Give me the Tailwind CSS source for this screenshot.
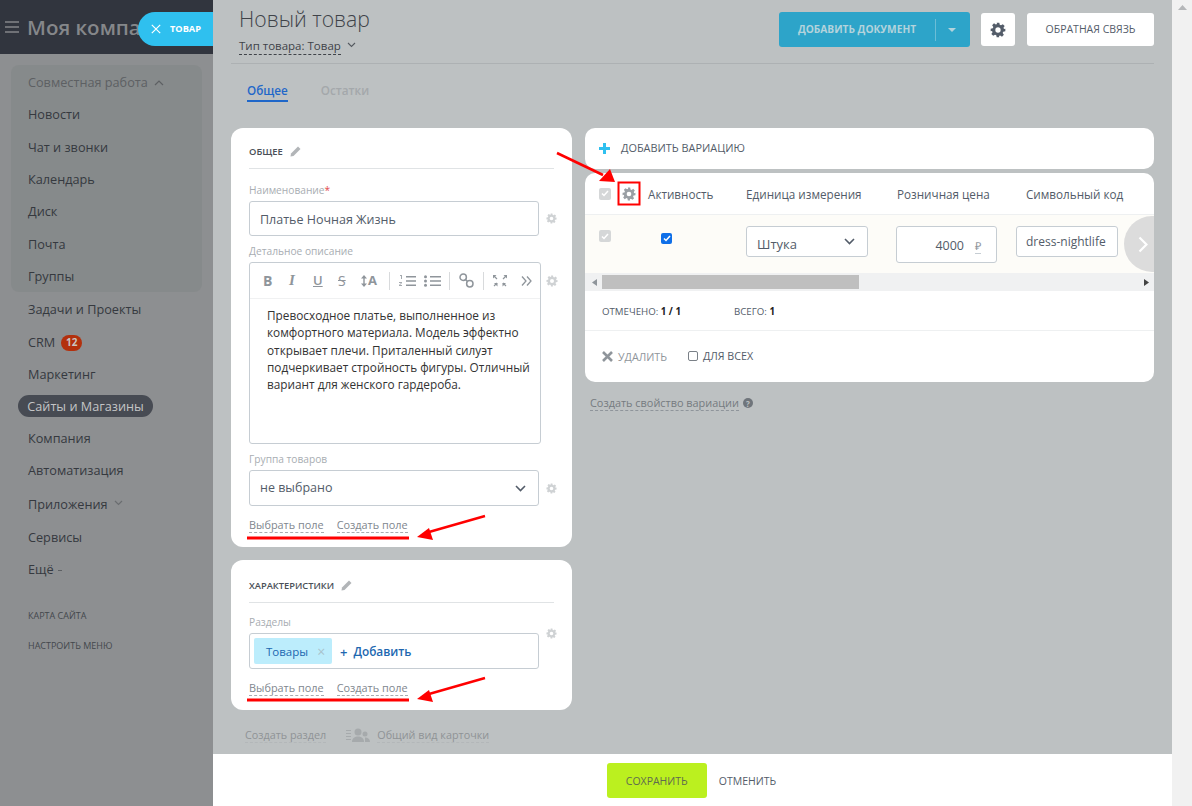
<!DOCTYPE html>
<html>
<head>
  <meta charset="UTF-8">
  <title>Новый товар</title>
  <script src="https://cdn.jsdelivr.net/npm/@tailwindcss/browser@4"></script>
</head>
<body class="m-0 overflow-hidden bg-[#bdc1c2] font-['Open_Sans',sans-serif]">
  <div class="relative flex h-[806px] w-[1192px] overflow-hidden">

    <!-- Sidebar -->
    <aside class="h-full w-[213px] shrink-0 bg-[#8d8f91] text-[12.7px] text-[#35393f]">
      <div class="flex h-[54px] items-center overflow-hidden bg-[#31353e] pl-[5px]">
        <div class="flex w-[14px] flex-col gap-[3px]">
          <div class="h-[2px] bg-[#6f7176]"></div>
          <div class="h-[2px] bg-[#6f7176]"></div>
          <div class="h-[2px] bg-[#6f7176]"></div>
        </div>
        <div class="ml-[8px] w-[116px] overflow-hidden whitespace-nowrap text-[20.5px] font-semibold text-[#85878a]">Моя компания</div>
      </div>
      <div class="mx-[11px] mt-[11px] h-[227px] rounded-[8px] bg-[#868a8b] pl-[17px] pt-[1.5px]">
        <div class="flex h-[32px] items-center text-[#5d6063]">Совместная работа
          <svg class="ml-[6px]" width="10" height="6" viewBox="0 0 10 6" fill="none" stroke="#5d6063" stroke-width="1.2"><path d="M1 5l4-4 4 4"/></svg>
        </div>
        <div class="flex h-[32.4px] items-center">Новости</div>
        <div class="flex h-[32.4px] items-center">Чат и звонки</div>
        <div class="flex h-[32.4px] items-center">Календарь</div>
        <div class="flex h-[32.4px] items-center">Диск</div>
        <div class="flex h-[32.4px] items-center">Почта</div>
        <div class="flex h-[32.4px] items-center">Группы</div>
      </div>
      <div class="mt-[2px] pl-[28px]">
        <div class="flex h-[32px] items-center">Задачи и Проекты</div>
        <div class="flex h-[33px] items-center">CRM
          <span class="ml-[6px] flex h-[16px] w-[21px] items-center justify-center rounded-full bg-[#b3300d] text-[10px] font-bold text-[#c9c5c1]">12</span>
        </div>
        <div class="flex h-[32px] items-center">Маркетинг</div>
      </div>
      <div class="mb-[6px] ml-[18px] mt-[4px] flex h-[22px] w-[135px] items-center justify-center rounded-full bg-[#474b53] pt-[2px] text-[#c4c5c6]">Сайты и Магазины</div>
      <div class="pl-[28px]">
        <div class="flex h-[32px] items-center">Компания</div>
        <div class="flex h-[32px] items-center">Автоматизация</div>
        <div class="flex h-[35px] items-center">Приложения
          <svg class="mb-[3px] ml-[6px]" width="9" height="6" viewBox="0 0 9 6" fill="none" stroke="#6a6d70" stroke-width="1.2"><path d="M1 1l3.5 3.5L8 1"/></svg>
        </div>
        <div class="flex h-[32px] items-center">Сервисы</div>
        <div class="flex h-[31px] items-center">Ещё
          <span class="ml-[4px] mt-[1px] h-px w-[4px] bg-[#5d6063]"></span>
        </div>
        <div class="mt-[16px] flex h-[30px] items-center text-[9px] text-[#43474c]">КАРТА САЙТА</div>
        <div class="flex h-[30px] items-center text-[9px] text-[#43474c]">НАСТРОИТЬ МЕНЮ</div>
      </div>
    </aside>

    <!-- Close tab over the sidebar -->
    <div class="absolute left-[138px] top-[12px] flex h-[34px] w-[75px] items-center rounded-l-full bg-[#2fc0ef] pl-[13px] text-white">
      <svg width="10" height="10" viewBox="0 0 10 10" fill="none" stroke="#fff" stroke-width="1.2"><path d="M.8.8l8.4 8.4M9.2.8L.8 9.2"/></svg>
      <span class="ml-[9px] text-[9.2px] font-bold">ТОВАР</span>
    </div>

    <!-- Slider content -->
    <div class="flex h-full w-[959px] shrink-0 flex-col">
      <main class="h-[754px] overflow-hidden pl-[18px] pr-[18px]">
        <div class="flex h-[64px] border-b border-[#adb1b3] pl-[8px] pt-[5px]">
          <div>
            <div class="text-[21.2px] leading-[28px] font-light text-[#3f4349]">Новый товар</div>
            <div class="mt-[5px] flex items-center text-[11.5px] leading-[16px] text-[#3f4349]">
              <span class="border-b border-dashed border-[#3f4349]">Тип товара: Товар</span>
              <svg class="mb-[3px] ml-[6px]" width="9" height="6" viewBox="0 0 9 6" fill="none" stroke="#555a60" stroke-width="1.1"><path d="M1 1l3.5 3.5L8 1"/></svg>
            </div>
          </div>
          <div class="ml-auto mt-[7px] flex h-[35px] items-start">
            <div class="flex h-[35px] w-[191px] items-center rounded-[3px] bg-[#2da4c9] text-[10.2px] font-bold text-[#b3d3dc]">
              <span class="w-[156px] text-center">ДОБАВИТЬ ДОКУМЕНТ</span>
              <span class="h-[22px] w-px bg-[#6cbdd6]"></span>
              <svg class="ml-[12px]" width="8" height="4" viewBox="0 0 8 4" fill="#b3d3dc"><path d="M0 0h8L4 4z"/></svg>
            </div>
            <div class="ml-[11px] mt-px flex h-[33px] w-[34px] items-center justify-center rounded-[3px] bg-white">
              <svg width="16" height="16" viewBox="0 0 24 24" fill="#535c69"><path fill-rule="evenodd" d="M10 1h4l.6 3.2 1.9.8 2.7-1.8 2.8 2.8-1.8 2.7.8 1.9L23 10v4l-3.2.6-.8 1.9 1.8 2.7-2.8 2.8-2.7-1.8-1.9.8L14 23h-4l-.6-3.2-1.9-.8-2.7 1.8-2.8-2.8 1.8-2.7-.8-1.9L1 14v-4l3.2-.6.8-1.9-1.8-2.7 2.8-2.8 2.7 1.8 1.9-.8zM12 8a4 4 0 100 8 4 4 0 000-8z"/></svg>
            </div>
            <div class="ml-[12px] mt-px flex h-[33px] w-[127px] items-center justify-center rounded-[3px] bg-white text-[10.5px] font-medium text-[#535c69]">ОБРАТНАЯ СВЯЗЬ</div>
          </div>
        </div>

        <div class="ml-[16px] mt-[18px] flex h-[46px] items-start text-[11.7px]">
          <div class="h-[20px] border-b-2 border-[#1f67c9] font-semibold leading-[17px] text-[#1f67c9]">Общее</div>
          <div class="ml-[33px] font-semibold leading-[17px] text-[#a4a8ab]">Остатки</div>
        </div>

        <div class="flex items-start">
          <!-- Left column -->
          <div class="w-[341px] shrink-0">
            <section class="h-[419px] rounded-[12px] bg-white px-[18px] pt-[16px] text-[#535c69]">
              <div class="flex h-[25px] items-start border-b border-[#e0e3e5]">
                <span class="text-[9.4px] font-semibold leading-[16px] text-[#4a4f57]">ОБЩЕЕ</span>
                <svg class="ml-[7px] mt-[2px]" width="11" height="11" viewBox="0 0 11 11" fill="#b2b5b8"><path d="M8 .5L10.500 3 3.500 10 .5 10.500 1 7.500z"/></svg>
              </div>
              <div class="mt-[14px] text-[10.2px] leading-[15px] text-[#a8adb2]">Наименование<span class="text-[#e34a4a]">*</span></div>
              <div class="mt-[3px] flex items-center">
                <div class="flex h-[35px] w-[290px] shrink-0 items-center rounded-[3px] border border-[#c6cdd3] pl-[10px] pt-[3px] text-[12.5px] text-[#535c69]">Платье Ночная Жизнь</div>
                <svg class="ml-[7px] shrink-0" width="11" height="11" viewBox="0 0 24 24" fill="#cfd2d4"><path fill-rule="evenodd" d="M10 1h4l.6 3.2 1.9.8 2.7-1.8 2.8 2.8-1.8 2.7.8 1.9L23 10v4l-3.2.6-.8 1.9 1.8 2.7-2.8 2.8-2.7-1.8-1.9.8L14 23h-4l-.6-3.2-1.9-.8-2.7 1.8-2.8-2.8 1.8-2.7-.8-1.9L1 14v-4l3.2-.6.8-1.9-1.8-2.7 2.8-2.8 2.7 1.8 1.9-.8zM12 8a4 4 0 100 8 4 4 0 000-8z"/></svg>
              </div>
              <div class="mt-[8px] text-[10.2px] leading-[15px] text-[#a8adb2]">Детальное описание</div>
              <div class="mt-[3px] flex items-start">
                <div class="h-[182px] w-[292px] shrink-0 rounded-[3px] border border-[#c6cdd3]">
                  <div class="flex h-[36px] items-center border-b border-[#f0f1f2] pl-[13px] text-[#8f959b]">
                    <span class="w-[26px] text-[14px] font-bold">B</span>
                    <span class="w-[24px] font-['Liberation_Serif',serif] text-[15px] font-bold italic">I</span>
                    <span class="w-[25px] text-[13px] font-semibold underline">U</span>
                    <span class="w-[23px] text-[14px] line-through">S</span>
                    <span class="flex w-[28px] items-center">
                      <svg width="6" height="12" viewBox="0 0 6 12" fill="#8f959b"><path d="M3 0l3 3.500H3.700v5H6L3 12 0 8.500h2.300v-5H0z"/></svg>
                      <span class="ml-[1px] text-[13px] font-bold">A</span>
                    </span>
                    <span class="h-[18px] w-px bg-[#d8dadc]"></span>
                    <svg class="ml-[9px]" width="17" height="12" viewBox="0 0 17 12" fill="#8f959b"><path d="M7 1h10v1.500H7zM7 5.200h10v1.500H7zM7 9.500h10V11H7z"/><path d="M1 0h2v4H2V1H1zM0 7h3v1L1 10h2v1H0v-1l2-2H0z" fill-opacity=".8"/></svg>
                    <svg class="ml-[8px]" width="17" height="12" viewBox="0 0 17 12" fill="#8f959b"><circle cx="1.500" cy="1.700" r="1.500"/><circle cx="1.500" cy="6" r="1.500"/><circle cx="1.500" cy="10.300" r="1.500"/><path d="M6 1h11v1.500H6zM6 5.200h11v1.500H6zM6 9.500h11V11H6z"/></svg>
                    <span class="ml-[8px] h-[18px] w-px bg-[#d8dadc]"></span>
                    <svg class="ml-[9px]" width="15" height="15" viewBox="0 0 15 15" fill="none" stroke="#8f959b" stroke-width="1.500"><circle cx="4.200" cy="4.200" r="3.200"/><circle cx="10.800" cy="10.800" r="3.200"/><path d="M6.500 6.500l2 2"/></svg>
                    <span class="ml-[9px] h-[18px] w-px bg-[#d8dadc]"></span>
                    <svg class="ml-[9px]" width="14" height="12" viewBox="0 0 14 12" fill="none" stroke="#8f959b" stroke-width="1.200"><path d="M1 1l3 3M13 1l-3 3M1 11l3-3M13 11l-3-3"/><path d="M0 0h3.500L0 3.500zM14 0h-3.500L14 3.500zM4.500 8v3.500L1 8zM9.500 8v3.500L13 8z" fill="#8f959b" stroke="none"/></svg>
                    <svg class="ml-[14px]" width="11" height="10" viewBox="0 0 11 10" fill="none" stroke="#8f959b" stroke-width="1.300"><path d="M1 .5L5 5 1 9.500M6 .5L10 5 6 9.500"/></svg>
                  </div>
                  <div class="pl-[17px] pr-[8px] pt-[8px] text-[11.8px] leading-[17.3px] text-[#333]">Превосходное платье, выполненное из комфортного материала. Модель эффектно открывает плечи. Приталенный силуэт подчеркивает стройность фигуры. Отличный вариант для женского гардероба.</div>
                </div>
                <svg class="ml-[5px] mt-[13px] shrink-0" width="12" height="12" viewBox="0 0 24 24" fill="#cfd2d4"><path fill-rule="evenodd" d="M10 1h4l.6 3.2 1.9.8 2.7-1.8 2.8 2.8-1.8 2.7.8 1.9L23 10v4l-3.2.6-.8 1.9 1.8 2.7-2.8 2.8-2.7-1.8-1.9.8L14 23h-4l-.6-3.2-1.9-.8-2.7 1.8-2.8-2.8 1.8-2.7-.8-1.9L1 14v-4l3.2-.6.8-1.9-1.8-2.7 2.8-2.8 2.7 1.8 1.9-.8zM12 8a4 4 0 100 8 4 4 0 000-8z"/></svg>
              </div>
              <div class="mt-[8px] text-[10.2px] leading-[15px] text-[#a8adb2]">Группа товаров</div>
              <div class="mt-[3px] flex items-center">
                <div class="flex h-[36px] w-[290px] shrink-0 items-center justify-between rounded-[3px] border border-[#c6cdd3] px-[10px] pt-[1px] text-[12.5px] text-[#535c69]">не выбрано
                  <svg class="mr-[2px]" width="11" height="7" viewBox="0 0 11 7" fill="none" stroke="#535c69" stroke-width="1.600"><path d="M1 1l4.500 4.500L10 1"/></svg>
                </div>
                <svg class="ml-[7px] shrink-0" width="11" height="11" viewBox="0 0 24 24" fill="#cfd2d4"><path fill-rule="evenodd" d="M10 1h4l.6 3.2 1.9.8 2.7-1.8 2.8 2.8-1.8 2.7.8 1.9L23 10v4l-3.2.6-.8 1.9 1.8 2.7-2.8 2.8-2.7-1.8-1.9.8L14 23h-4l-.6-3.2-1.9-.8-2.7 1.8-2.8-2.8 1.8-2.7-.8-1.9L1 14v-4l3.2-.6.8-1.9-1.8-2.7 2.8-2.8 2.7 1.8 1.9-.8zM12 8a4 4 0 100 8 4 4 0 000-8z"/></svg>
              </div>
              <div class="mt-[11px] flex text-[10.9px] leading-[15px] text-[#80868e]">
                <span class="border-b border-dashed border-[#a8adb2]">Выбрать поле</span>
                <span class="ml-[13px] border-b border-dashed border-[#a8adb2]">Создать поле</span>
              </div>
            </section>

            <section class="mt-[13px] h-[150px] rounded-[12px] bg-white px-[18px] pt-[18px]">
              <div class="flex h-[25px] items-start border-b border-[#e0e3e5]">
                <span class="text-[9.3px] font-semibold leading-[16px] text-[#4a4f57]">ХАРАКТЕРИСТИКИ</span>
                <svg class="ml-[7px] mt-[2px]" width="11" height="11" viewBox="0 0 11 11" fill="#b2b5b8"><path d="M8 .5L10.500 3 3.500 10 .5 10.500 1 7.500z"/></svg>
              </div>
              <div class="mt-[12px] text-[10.2px] leading-[15px] text-[#a8adb2]">Разделы</div>
              <div class="mt-[3px] flex items-start">
                <div class="flex h-[36px] w-[290px] shrink-0 items-center rounded-[3px] border border-[#c6cdd3] pl-[4px]">
                  <div class="flex h-[26px] w-[78px] items-center rounded-[2px] bg-[#bcedfc] pl-[12px] pt-px text-[11.5px] text-[#2067b0]">Товары
                    <span class="ml-[9px] text-[14px] leading-none text-[#a9c3cc]">×</span>
                  </div>
                  <span class="ml-[8px] pt-[2px] text-[13px] font-semibold leading-none text-[#2067b0]">+</span>
                  <span class="ml-[6px] pt-[2px] text-[11.8px] font-semibold text-[#2067b0]">Добавить</span>
                </div>
                <svg class="ml-[7px] mt-[-5px] shrink-0" width="11" height="11" viewBox="0 0 24 24" fill="#cfd2d4"><path fill-rule="evenodd" d="M10 1h4l.6 3.2 1.9.8 2.7-1.8 2.8 2.8-1.8 2.7.8 1.9L23 10v4l-3.2.6-.8 1.9 1.8 2.7-2.8 2.8-2.7-1.8-1.9.8L14 23h-4l-.6-3.2-1.9-.8-2.7 1.8-2.8-2.8 1.8-2.7-.8-1.9L1 14v-4l3.2-.6.8-1.9-1.8-2.7 2.8-2.8 2.7 1.8 1.9-.8zM12 8a4 4 0 100 8 4 4 0 000-8z"/></svg>
              </div>
              <div class="mt-[11px] flex text-[10.9px] leading-[15px] text-[#80868e]">
                <span class="border-b border-dashed border-[#a8adb2]">Выбрать поле</span>
                <span class="ml-[13px] border-b border-dashed border-[#a8adb2]">Создать поле</span>
              </div>
            </section>

            <div class="mt-[17px] flex items-center pl-[14px] text-[10.8px] leading-[15px] text-[#8f9396]">
              <span class="border-b border-dashed border-[#b3b7b9]">Создать раздел</span>
              <svg class="ml-[20px]" width="24" height="15" viewBox="0 0 24 15" fill="#a6aaac"><path d="M0 2h5v1H0zM0 5h5v1H0zM0 8h5v1H0zM0 11h5v1H0z"/><circle cx="12" cy="4" r="3.500"/><path d="M6 14c0-4 3-5.500 6-5.500s6 1.500 6 5.500z"/><circle cx="19" cy="6" r="2.500"/><path d="M19 14h5c0-3-2-4.500-5-4.500z"/></svg>
              <span class="ml-[7px] border-b border-dashed border-[#b3b7b9]">Общий вид карточки</span>
            </div>
          </div>

          <!-- Right column -->
          <div class="ml-[13px] w-[569px] shrink-0">
            <div class="flex h-[41px] items-center rounded-[10px] bg-white pl-[14px] text-[10.9px] font-medium text-[#535c69]">
              <svg width="11" height="11" viewBox="0 0 11 11" fill="#2fc0ef"><path d="M4 0h3v4h4v3H7v4H4V7H0V4h4z"/></svg>
              <span class="ml-[11px]">ДОБАВИТЬ ВАРИАЦИЮ</span>
            </div>

            <div class="relative mt-[4px] h-[209px] overflow-hidden rounded-[10px] bg-white">
              <div class="flex h-[42px] items-center border-b border-[#eef0f1] text-[11.7px] text-[#535c69]">
                <span class="ml-[14px] flex h-[12px] w-[12px] items-center justify-center rounded-[2px] bg-[#d5d7d8]"><svg width="8" height="7" viewBox="0 0 8 7" fill="none" stroke="#fff" stroke-width="1.500"><path d="M1 3.500l2 2L7 1"/></svg></span>
                <svg class="ml-[11px]" width="14" height="14" viewBox="0 0 24 24" fill="#9a9fa4"><path fill-rule="evenodd" d="M10 1h4l.6 3.2 1.9.8 2.7-1.8 2.8 2.8-1.8 2.7.8 1.9L23 10v4l-3.2.6-.8 1.9 1.8 2.7-2.8 2.8-2.7-1.8-1.9.8L14 23h-4l-.6-3.2-1.9-.8-2.7 1.8-2.8-2.8 1.8-2.7-.8-1.9L1 14v-4l3.2-.6.8-1.9-1.8-2.7 2.8-2.8 2.7 1.8 1.9-.8zM12 8a4 4 0 100 8 4 4 0 000-8z"/></svg>
                <span class="ml-[12px] w-[98px] pt-[2px]">Активность</span>
                <span class="w-[151px] pt-[2px]">Единица измерения</span>
                <span class="w-[129px] pt-[2px]">Розничная цена</span>
                <span class="pt-[2px]">Символьный код</span>
              </div>
              <div class="flex h-[58px] items-start bg-[#fdfcf8] text-[#535c69]">
                <span class="ml-[14px] mt-[15px] flex h-[12px] w-[12px] items-center justify-center rounded-[2px] bg-[#d5d7d8]"><svg width="8" height="7" viewBox="0 0 8 7" fill="none" stroke="#fff" stroke-width="1.500"><path d="M1 3.500l2 2L7 1"/></svg></span>
                <span class="ml-[50px] mt-[18px] flex h-[11px] w-[11px] items-center justify-center rounded-[2px] bg-[#0f6fe8]"><svg width="8" height="7" viewBox="0 0 8 7" fill="none" stroke="#fff" stroke-width="1.500"><path d="M1 3.500l2 2L7 1"/></svg></span>
                <div class="ml-[74px] mt-[11px] flex h-[31px] w-[122px] items-center justify-between rounded-[3px] border border-[#c6cdd3] bg-white pl-[10px] pr-[10px] pt-[6px] text-[13px]">Штука
                  <svg class="mb-[6px] mr-[2px]" width="11" height="7" viewBox="0 0 11 7" fill="none" stroke="#535c69" stroke-width="1.600"><path d="M1 1l4.500 4.500L10 1"/></svg>
                </div>
                <div class="ml-[28px] mt-[11px] flex h-[37px] w-[101px] items-center justify-end rounded-[3px] border border-[#c6cdd3] bg-white pr-[15px] pt-[3px] text-[12.5px]">4000
                  <span class="ml-[11px] border-b border-dashed border-[#c6cdd3] text-[11px] leading-[14px] text-[#8f959b]">₽</span>
                </div>
                <div class="ml-[19px] mt-[11px] flex h-[31px] w-[102px] items-center rounded-[3px] border border-[#c6cdd3] bg-white pl-[9px] text-[12px]">dress-nightlife</div>
              </div>
              <div class="flex h-[18px] items-center bg-[#f0f1f2]">
                <svg class="ml-[7px]" width="5" height="7" viewBox="0 0 5 7" fill="#8f959b"><path d="M5 0v7L0 3.500z"/></svg>
                <div class="ml-[5px] h-[14px] w-[257px] bg-[#bfbfbf]"></div>
                <svg class="ml-auto mr-[5px]" width="5" height="7" viewBox="0 0 5 7" fill="#444"><path d="M0 0v7l5-3.500z"/></svg>
              </div>
              <div class="flex h-[40px] items-center border-b border-[#eef0f1] pl-[17px] pt-[3px] text-[9.7px] text-[#535c69]">
                <span class="w-[132px]">ОТМЕЧЕНО: <b class="text-[#222]">1 / 1</b></span>
                <span>ВСЕГО: <b class="text-[#222]">1</b></span>
              </div>
              <div class="flex h-[50px] items-center pl-[17px] text-[10.7px] font-medium">
                <svg width="11" height="11" viewBox="0 0 11 11" fill="none" stroke="#8f959b" stroke-width="2.600"><path d="M1 1l9 9M10 1l-9 9"/></svg>
                <span class="ml-[5px] pt-[2px] text-[#8f959b]">УДАЛИТЬ</span>
                <span class="ml-[21px] h-[10px] w-[10px] rounded-[2px] border border-[#7a8087] bg-white"></span>
                <span class="ml-[5px] pt-[1px] text-[#535c69]">ДЛЯ ВСЕХ</span>
              </div>
              <!-- Table scroll button -->
              <div class="absolute right-[-30px] top-[43px] flex h-[56px] w-[60px] items-center rounded-full bg-[#dcdcdc] pl-[14px]">
                <svg width="10" height="17" viewBox="0 0 10 17" fill="none" stroke="#fff" stroke-width="2.200"><path d="M1.500 1.500l7 7-7 7"/></svg>
              </div>
            </div>

            <div class="ml-[5px] mt-[13px] flex items-center text-[10.9px] leading-[15px] text-[#757b80]">
              <span class="border-b border-dashed border-[#8f959b]">Создать свойство вариации</span>
              <span class="ml-[4px] flex h-[10px] w-[10px] items-center justify-center rounded-full bg-[#6f757b] text-[8px] font-bold text-[#bdc1c2]">?</span>
            </div>
          </div>
        </div>
      </main>

      <footer class="flex h-[52px] items-center justify-center bg-white pr-[2px] text-[10.5px] font-medium">
        <div class="flex h-[35px] w-[100px] items-center justify-center rounded-[3px] bg-[#bbf01f] pt-[3px] text-[#5f6b4f]">СОХРАНИТЬ</div>
        <div class="ml-[12px] pt-[3px] text-[#535c69]">ОТМЕНИТЬ</div>
      </footer>
    </div>

    <!-- Scrollbar -->
    <div class="flex h-full w-[20px] shrink-0 justify-center bg-[#f1f1f1] pt-[5px]">
      <svg width="9" height="5" viewBox="0 0 9 5" fill="#b5b7b9"><path d="M0 5h9L4.500 0z"/></svg>
    </div>

    <!-- Red annotations drawn over the screenshot -->
    <svg class="absolute left-0 top-0" width="1192" height="806" fill="none">
      <rect x="618.500" y="182.500" width="21" height="22" stroke="#f00" stroke-width="2"/>
      <path d="M557 153l46 22" stroke="#f00" stroke-width="2.500"/>
      <path d="M615 182l-16-1 11-12z" fill="#f00"/>
      <path d="M247 538h162" stroke="#f00" stroke-width="3"/>
      <path d="M485 516l-56 16" stroke="#f00" stroke-width="2.500"/>
      <path d="M417 537l12-9 4 12z" fill="#f00"/>
      <path d="M247 700h162" stroke="#f00" stroke-width="3"/>
      <path d="M485 678l-56 16" stroke="#f00" stroke-width="2.500"/>
      <path d="M417 699l12-9 4 12z" fill="#f00"/>
    </svg>
  </div>
</body>
</html>
